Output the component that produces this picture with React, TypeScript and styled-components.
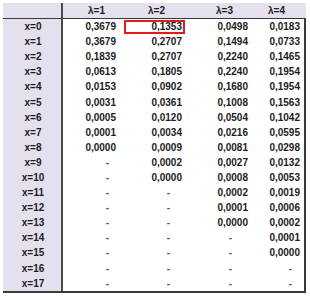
import React from "react";
import styled, { createGlobalStyle } from "styled-components";

const GlobalStyle = createGlobalStyle`
  body {
    margin: 0;
    background: #ffffff;
    font-family: "Liberation Sans", Arial, sans-serif;
  }
`;

const Page = styled.div`
  padding: 3px 0 0 3px;
  width: 310px;
  height: 296px;
  box-sizing: border-box;
`;

const Table = styled.div`
  display: grid;
  grid-template-columns: 60px 61px 62px 64px 56px;
  grid-template-rows: 16px repeat(18, 15.1px);
  width: 303px;
  border-right: 2px solid #3a3a3a;
  border-bottom: 2px solid #3a3a3a;
  box-sizing: border-box;
  font-size: 10px;
  font-weight: 700;
  color: #1c1c1c;
`;

const HeadCell = styled.div<{ $left: number }>`
  background: #e5e0ed;
  border-bottom: 1px solid #3a3a3a;
  display: flex;
  align-items: center;
  padding-left: ${(p) => p.$left}px;
  line-height: 1;
`;

const CornerCell = styled.div`
  background: #e5e0ed;
  border-bottom: 1px solid #3a3a3a;
  border-right: 2px solid #4a4a4a;
`;

const LabelCell = styled.div`
  background: #e5e0ed;
  border-right: 2px solid #4a4a4a;
  display: flex;
  align-items: center;
  justify-content: center;
  padding-left: 2px;
`;

const ValueCell = styled.div<{ $right: number; $marked?: boolean }>`
  position: relative;
  display: flex;
  align-items: center;
  justify-content: flex-end;
  padding-right: ${(p) => p.$right}px;

  ${(p) =>
    p.$marked &&
    `
    &::after {
      content: "";
      position: absolute;
      top: 1px;
      left: 0;
      right: 1px;
      bottom: 0;
      border: 2px solid #e21c1c;
    }
  `}
`;

const Dash = styled.span`
  color: #555;
`;

const headers = [
  { label: "λ=1", left: 25 },
  { label: "λ=2", left: 24 },
  { label: "λ=3", left: 30 },
  { label: "λ=4", left: 18 },
];

// right padding for numbers and for dashes, per column
const valuePad = [8, 4, 2, 6];
const dashPad = [15, 16, 18, 14];

const data: (string | null)[][] = [
  ["0,3679", "0,1353", "0,0498", "0,0183"],
  ["0,3679", "0,2707", "0,1494", "0,0733"],
  ["0,1839", "0,2707", "0,2240", "0,1465"],
  ["0,0613", "0,1805", "0,2240", "0,1954"],
  ["0,0153", "0,0902", "0,1680", "0,1954"],
  ["0,0031", "0,0361", "0,1008", "0,1563"],
  ["0,0005", "0,0120", "0,0504", "0,1042"],
  ["0,0001", "0,0034", "0,0216", "0,0595"],
  ["0,0000", "0,0009", "0,0081", "0,0298"],
  [null, "0,0002", "0,0027", "0,0132"],
  [null, "0,0000", "0,0008", "0,0053"],
  [null, null, "0,0002", "0,0019"],
  [null, null, "0,0001", "0,0006"],
  [null, null, "0,0000", "0,0002"],
  [null, null, null, "0,0001"],
  [null, null, null, "0,0000"],
  [null, null, null, null],
  [null, null, null, null],
];

const App = () => {
  return (
    <React.Fragment>
      <GlobalStyle />
      <Page>
        <Table>
          <CornerCell />
          {headers.map((h) => (
            <HeadCell key={h.label} $left={h.left}>
              {h.label}
            </HeadCell>
          ))}
          {data.map((row, i) => (
            <React.Fragment key={i}>
              <LabelCell>x={i}</LabelCell>
              {row.map((v, j) =>
                v ? (
                  <ValueCell
                    key={j}
                    $right={valuePad[j]}
                    $marked={i === 0 && j === 1}
                  >
                    {v}
                  </ValueCell>
                ) : (
                  <ValueCell key={j} $right={dashPad[j]}>
                    <Dash>-</Dash>
                  </ValueCell>
                )
              )}
            </React.Fragment>
          ))}
        </Table>
      </Page>
    </React.Fragment>
  );
};

export default App;
